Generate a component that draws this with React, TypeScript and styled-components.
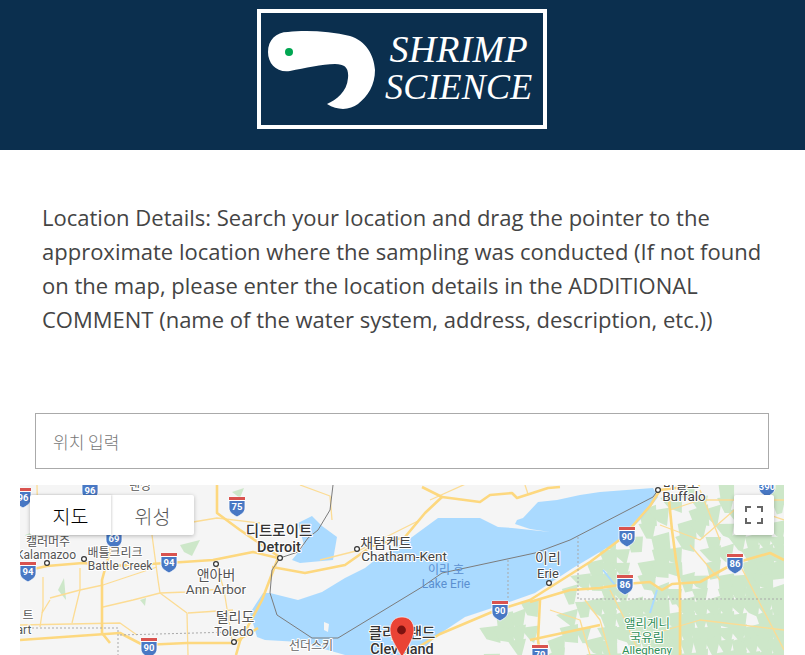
import React from 'react';
import styled, { createGlobalStyle } from 'styled-components';

const GlobalStyle = createGlobalStyle`
	html, body {
		margin: 0;
		padding: 0;
		background: #fff;
		overflow: hidden;
	}
	* {
		box-sizing: border-box;
	}
`;

const mapFont = 'Roboto, "Noto Sans CJK KR", sans-serif';

const majorRoads = [
	'M20 572 L47 566 L83 563 L112 566 L168 563 L213 560 L253 552 L278 558',
	'M20 640 L120 633 L143 645 L187 643 L233 643 L258 628',
	'M405 655 L440 634 L492 612 L530 600 L590 562 L622 538 L650 506 L660 490 L700 485',
	'M217 485 L217 513 L240 530 L262 545 L278 556',
	'M278 558 L262 600 L240 641 L236 655',
	'M114 530 L113 540 L102 580 L102 633 L110 643',
	'M272 567 L305 573 L345 565 L372 546 L405 537 L425 513 L442 497 L422 487',
	'M442 497 L480 502 L490 495 L512 493 L517 498 L548 488 L560 487',
	'M530 602 L570 590 L600 588 L625 584 L650 582 L662 590 L672 584 L700 582 L735 563 L770 553 L784 560',
	'M669 500 L672 530 L676 560 L680 585 L680 655',
	'M540 600 L538 640 L540 655',
	'M530 640 L600 625',
];

const minorRoads = [
	'M37 485 L38 530',
	'M152 535 L158 580 L160 593 L187 613 L188 655',
	'M193 522 L217 518 L260 523',
	'M216 563 L224 590 L232 640',
	'M20 625 L120 623 L137 635',
	'M43 577 L43 607 L40 627',
	'M80 568 L80 590 L72 623',
	'M50 600 L42 613',
	'M50 598 L80 590 L103 585 L157 567',
	'M103 607 L133 600 L160 593 L187 592 L243 587',
	'M188 613 L233 610',
	'M300 485 L330 496 L332 520',
	'M320 560 L360 550 L420 520',
	'M430 500 L470 482',
	'M525 485 L528 494',
	'M610 590 L625 620 L640 655',
	'M632 640 L700 620 L784 630',
	'M660 525 L700 540 L740 505 L784 520',
	'M585 600 L600 620 L610 655',
	'M740 565 L784 650',
	'M700 490 L720 540',
	'M670 510 L700 500 L784 500',
	'M690 545 L720 580',
	'M550 610 L580 620 L590 655',
];

// forest cover on the east side, jagged cells picked by a fixed pseudo random sequence
const noise = (i: number) => {
	const v = Math.sin(i * 12.9898) * 43758.5453;
	return v - Math.floor(v);
};

const buildForest = () => {
	const cells: string[] = [];
	let i = 1;
	for (let y = 485; y < 655; y += 13) {
		for (let x = 420; x < 784; x += 13) {
			i += 4;
			const shore = 648 - ((x - 430) * 158) / 230;
			if (y < shore + 4) continue;
			const density = x > 600 && y > 590 ? 0.92 : x > 590 ? 0.55 : 0.4;
			if (noise(i) > density) continue;
			const a = noise(i + 1) * 7;
			const b = noise(i + 2) * 7;
			const c = noise(i + 3) * 7;
			cells.push(`M${x - a} ${y} L${x + 15} ${y - b} L${x + 17 - c} ${y + 15} L${x + c} ${y + 17 - a} Z`);
		}
	}
	return cells;
};

const forest = buildForest();

const westPatches = [
	'M25 535 L38 530 L36 545 Z',
	'M180 545 L200 540 L192 556 L184 552 Z',
	'M58 590 L64 578 L66 600 Z',
	'M232 492 L244 488 L240 498 Z',
	'M140 600 L146 598 L145 606 Z',
];

const shields = [
	{ x: 23, y: 497, n: '96' },
	{ x: 90, y: 490, n: '96' },
	{ x: 237, y: 506, n: '75' },
	{ x: 114, y: 538, n: '69' },
	{ x: 28, y: 571, n: '94' },
	{ x: 169, y: 562, n: '94' },
	{ x: 149, y: 647, n: '90' },
	{ x: 500, y: 610, n: '90' },
	{ x: 627, y: 536, n: '90' },
	{ x: 625, y: 584, n: '86' },
	{ x: 735, y: 563, n: '86' },
	{ x: 767, y: 486, n: '390' },
	{ x: 540, y: 654, n: '79' },
];

const labels = [
	{ x: 48, y: 546, t: '캘러머주', s: 12, c: '#555', w: 400 },
	{ x: 46, y: 559, t: 'Kalamazoo', s: 12, c: '#555', w: 400 },
	{ x: 115, y: 557, t: '배틀크리크', s: 12, c: '#555', w: 400 },
	{ x: 120, y: 570, t: 'Battle Creek', s: 12, c: '#555', w: 400 },
	{ x: 216, y: 580, t: '앤아버', s: 14, c: '#555', w: 400 },
	{ x: 216, y: 594, t: 'Ann Arbor', s: 13.5, c: '#555', w: 400 },
	{ x: 235, y: 622, t: '털리도', s: 14, c: '#555', w: 400 },
	{ x: 234, y: 636, t: 'Toledo', s: 13, c: '#555', w: 400 },
	{ x: 279, y: 536, t: '디트로이트', s: 14.5, c: '#333', w: 500 },
	{ x: 279, y: 552, t: 'Detroit', s: 14.5, c: '#333', w: 500 },
	{ x: 386, y: 548, t: '채텀켄트', s: 14, c: '#444', w: 400 },
	{ x: 404, y: 561, t: 'Chatham-Kent', s: 13.5, c: '#444', w: 400 },
	{ x: 446, y: 574, t: '이리 호', s: 12, c: '#5a8fd0', w: 400, plain: true },
	{ x: 446, y: 588, t: 'Lake Erie', s: 12, c: '#5a8fd0', w: 400, plain: true },
	{ x: 548, y: 563, t: '이리', s: 14, c: '#444', w: 400 },
	{ x: 548, y: 578, t: 'Erie', s: 13, c: '#444', w: 400 },
	{ x: 684, y: 501, t: 'Buffalo', s: 13.5, c: '#444', w: 400 },
	{ x: 681, y: 488, t: '버펄로', s: 13, c: '#444', w: 400 },
	{ x: 311, y: 650, t: '선더스키', s: 12, c: '#666', w: 400 },
	{ x: 402, y: 638, t: '클리블랜드', s: 14.5, c: '#333', w: 500 },
	{ x: 402, y: 654, t: 'Cleveland', s: 14.5, c: '#333', w: 500 },
	{ x: 647, y: 628, t: '앨리게니', s: 12.5, c: '#2f8f57', w: 400 },
	{ x: 647, y: 642, t: '국유림', s: 12.5, c: '#2f8f57', w: 400 },
	{ x: 647, y: 654, t: 'Allegheny', s: 11.5, c: '#2f8f57', w: 400 },
	{ x: 140, y: 490, t: '랜싱', s: 12, c: '#555', w: 400 },
	{ x: 28, y: 620, t: '트', s: 12, c: '#555', w: 400 },
	{ x: 24, y: 634, t: 'art', s: 12, c: '#555', w: 400 },
];

const cities = [
	[47, 563], [84, 559], [216, 564], [234, 642], [280, 558], [357, 549], [549, 583], [658, 490],
];

const Shield = ({ x, y, n }: { x: number; y: number; n: string }) => (
	<g transform={`translate(${x} ${y})`}>
		<path d="M-8 -9 L8 -9 L8 2 C8 7 3 9 0 11 C-3 9 -8 7 -8 2 Z" fill="#4878c4" stroke="#fff" strokeWidth="0.8" />
		<path d="M-8 -9 L8 -9 L8 -6 L-8 -6 Z" fill="#d9534f" />
		<path d="M-8 -6 L8 -6 L8 -5 L-8 -5 Z" fill="#fff" />
		<ShieldText y={4} textAnchor="middle">{n}</ShieldText>
	</g>
);

const MapDrawing = () => (
	<MapSvg viewBox="20 485 764 170" preserveAspectRatio="none">
		<rect x="20" y="485" width="764" height="170" fill="#f5f5f5" />
		{forest.map((d) => <path key={d} d={d} fill="#cde7c9" />)}
		{westPatches.map((d) => <path key={d} d={d} fill="#cde7c9" />)}
		<path
			d="M298 523 L312 516 L322 526 L337 537 L333 560 L300 563 L292 560 L304 545 Z"
			fill="#aadaff"
		/>
		<path
			d="M270 593 L298 600 L322 592 L345 578 L365 568 L375 560 L408 540 L438 518 L480 518 L498 527 L512 528 L550 532 L530 529 L515 524 L517 520 L523 518 L538 502 L557 500 L580 495 L600 492 L653 488 L658 497 L643 517 L620 540 L573 568 L535 593 L492 608 L465 617 L435 637 L418 655 L345 655 L300 642 L265 640 L257 637 L250 613 L263 593 Z"
			fill="#aadaff"
		/>
		<path d="M324 622 L329 624 L328 632 L324 630 Z" fill="#f5f5f5" />
		<Water d="M603 570 L615 585 M657 590 L650 613" />
		{minorRoads.map((d) => <MinorRoad key={d} d={d} />)}
		{majorRoads.map((d) => <MajorRoad key={d} d={d} />)}
		<Border d="M333 485 L330 510 L318 530 L308 538 L298 552 L280 558 L272 570 L270 593 L277 615 L312 638 L338 638 L422 587 L442 573 L535 553 L570 540 L653 497 L658 490" />
		<DottedBorder d="M20 628 L118 628 L118 655 M120 635 L233 632 M508 560 L508 600 M578 537 L578 599 L784 599" />
		{shields.map((s) => <Shield key={`${s.x}-${s.n}`} {...s} />)}
		{labels.map((l) => (
			<MapLabel key={l.t} x={l.x} y={l.y} textAnchor="middle" fontSize={l.s} fontWeight={l.w} fill={l.c} $plain={l.plain}>
				{l.t}
			</MapLabel>
		))}
		{cities.map(([cx, cy]) => (
			<circle key={cx} cx={cx} cy={cy} r="2.4" fill="#fff" stroke="#333" strokeWidth="1.2" />
		))}
		<path
			d="M402 617 C391 617 390 627 390 630 C390 640 399 650 402 658 C405 650 414 640 414 630 C414 627 413 617 402 617 Z"
			fill="#ea4335"
			stroke="#fff"
			strokeWidth="0.6"
		/>
		<circle cx="401.5" cy="630" r="4.4" fill="#7d1210" />
	</MapSvg>
);

const App = () => (
	<>
		<GlobalStyle />
		<Page>
			<Header>
				<LogoFrame>
					<ShrimpSvg viewBox="267 30 110 80">
						<path
							d="M268 52 C268 40 276 32 288 32 C305 30 330 31 350 36 C366 41 374 55 375 70 C375 85 368 96 358 104 C350 110 338 111 327 104 C336 100 347 92 348 78 C349 68 345 64 335 64 C322 64 305 68 290 71 C277 73 268 64 268 52 Z"
							fill="#fff"
						/>
						<circle cx="289" cy="52" r="4" fill="#00a651" />
					</ShrimpSvg>
					<LogoText>
						<LogoLine $size={38}>SHRIMP</LogoLine>
						<LogoLine $size={36}>SCIENCE</LogoLine>
					</LogoText>
				</LogoFrame>
			</Header>
			<Intro>
				Location Details: Search your location and drag the pointer to the approximate location where the
				sampling was conducted (If not found on the map, please enter the location details in the ADDITIONAL
				COMMENT (name of the water system, address, description, etc.))
			</Intro>
			<SearchRow>
				<SearchInput placeholder="위치 입력" readOnly />
			</SearchRow>
			<MapPanel>
				<MapDrawing />
				<MapTypeControl>
					<MapTypeButton $active>지도</MapTypeButton>
					<MapTypeButton>위성</MapTypeButton>
				</MapTypeControl>
				<FullscreenButton aria-label="fullscreen">
					<svg width="18" height="18" viewBox="0 0 18 18">
						<path
							d="M0 6V0h6v2H2v4zM12 0h6v6h-2V2h-4zM18 12v6h-6v-2h4v-4zM6 18H0v-6h2v4h4z"
							fill="#666"
						/>
					</svg>
				</FullscreenButton>
			</MapPanel>
		</Page>
	</>
);

export default App;

const Page = styled.div`
	width: 805px;
	height: 655px;
	overflow: hidden;
	font-family: 'Open Sans', sans-serif;
`;

const Header = styled.header`
	height: 150px;
	background: #0b2f4e;
	display: flex;
	justify-content: flex-start;
	padding: 9px 0 0 257px;
`;

const LogoFrame = styled.div`
	width: 290px;
	height: 120px;
	border: 4px solid #fff;
	display: flex;
	align-items: flex-start;
	padding: 17px 0 0 6px;
`;

const ShrimpSvg = styled.svg`
	width: 110px;
	height: 80px;
	flex: none;
`;

const LogoText = styled.div`
	margin-left: 8px;
	display: flex;
	flex-direction: column;
	align-items: center;
`;

const LogoLine = styled.div<{ $size: number }>`
	font-family: 'Liberation Serif', serif;
	font-style: italic;
	font-size: ${(props) => props.$size}px;
	line-height: 38px;
	letter-spacing: 0.2px;
	color: #fff;
	white-space: nowrap;
`;

const Intro = styled.p`
	margin: 0;
	padding: 50px 30px 0 42px;
	height: 263px;
	font-size: 22px;
	line-height: 34px;
	color: #444;
`;

const SearchRow = styled.div`
	padding: 0 36px 0 35px;
`;

const SearchInput = styled.input`
	display: block;
	width: 100%;
	height: 56px;
	border: 1px solid #aaa;
	padding: 0 17px;
	font-family: 'Noto Sans CJK KR', sans-serif;
	font-size: 17px;
	font-weight: 300;
	outline: none;
	background: #fff;

	&::placeholder {
		color: #777;
		opacity: 1;
	}
`;

const MapPanel = styled.div`
	position: relative;
	margin: 16px 21px 0 20px;
	height: 170px;
	overflow: hidden;
`;

const MapSvg = styled.svg`
	display: block;
	width: 100%;
	height: 100%;
`;

const MajorRoad = styled.path`
	fill: none;
	stroke: #fdd87f;
	stroke-width: 2.6;
	stroke-linejoin: round;
`;

const MinorRoad = styled.path`
	fill: none;
	stroke: #fcdc94;
	stroke-width: 1.3;
	stroke-linejoin: round;
`;

const Water = styled.path`
	fill: none;
	stroke: #aadaff;
	stroke-width: 2;
`;

const Border = styled.path`
	fill: none;
	stroke: #7c7c7c;
	stroke-width: 1;
`;

const DottedBorder = styled.path`
	fill: none;
	stroke: #a9a9a9;
	stroke-width: 1;
	stroke-dasharray: 2 2;
`;

const ShieldText = styled.text`
	font-family: 'Roboto', sans-serif;
	font-size: 9.5px;
	font-weight: 700;
	fill: #fff;
`;

const MapLabel = styled.text<{ $plain?: boolean }>`
	font-family: ${mapFont};
	paint-order: stroke;
	stroke: ${(props) => (props.$plain ? 'none' : '#fff')};
	stroke-width: 2px;
	stroke-linejoin: round;
`;

const MapTypeControl = styled.div`
	position: absolute;
	top: 10px;
	left: 10px;
	display: flex;
	height: 40px;
	background: #fff;
	box-shadow: 0 1px 4px rgba(0, 0, 0, 0.25);
	border-radius: 2px;
`;

const MapTypeButton = styled.div<{ $active?: boolean }>`
	width: ${(props) => (props.$active ? '81px' : '83px')};
	display: flex;
	align-items: center;
	justify-content: center;
	font-family: ${mapFont};
	font-size: 19.5px;
	font-weight: 300;
	color: ${(props) => (props.$active ? '#000' : '#565656')};
	box-shadow: ${(props) => (props.$active ? '1px 0 2px rgba(0, 0, 0, 0.15)' : 'none')};
`;

const FullscreenButton = styled.div`
	position: absolute;
	top: 10px;
	right: 10px;
	width: 40px;
	height: 40px;
	background: #fff;
	border-radius: 2px;
	box-shadow: 0 1px 4px rgba(0, 0, 0, 0.25);
	display: flex;
	align-items: center;
	justify-content: center;
`;
